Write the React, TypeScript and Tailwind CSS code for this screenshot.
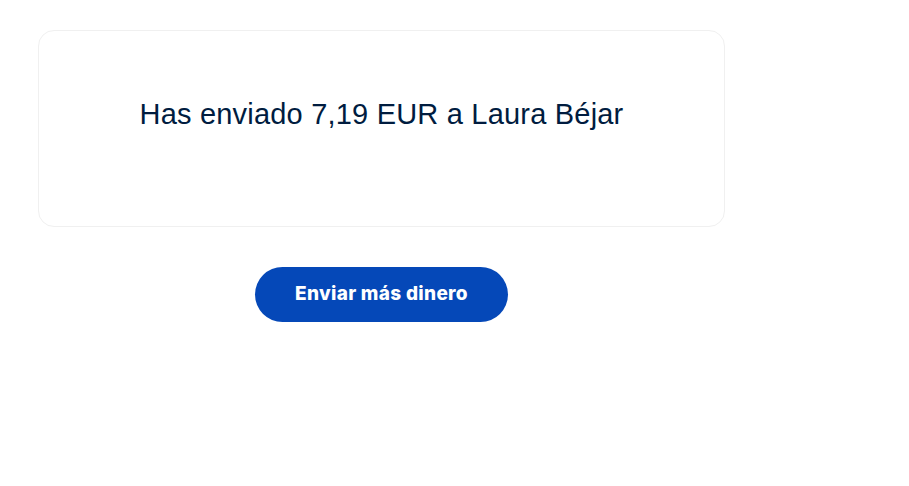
import React from 'react';

const App: React.FC = () => {
  return (
    <div className="min-h-screen w-full bg-white font-['Liberation_Sans',Arial,sans-serif]">
      <div className="w-[687px] pl-[38px] pt-[30px] box-content">
        <div className="h-[197px] rounded-2xl border border-[#f0f0f0] flex justify-center pt-[64px]">
          <p className="text-[29px] leading-[38px] text-[#001c3f] tracking-[0.2px]">
            Has enviado 7,19 EUR a Laura Béjar
          </p>
        </div>
        <div className="flex justify-center mt-[40px]">
          <button className="w-[253px] h-[55px] rounded-full bg-[#0548b8] text-white text-[19px] font-extrabold font-['Inter',sans-serif] tracking-[0.3px]">
            Enviar más dinero
          </button>
        </div>
      </div>
    </div>
  );
};

export default App;
